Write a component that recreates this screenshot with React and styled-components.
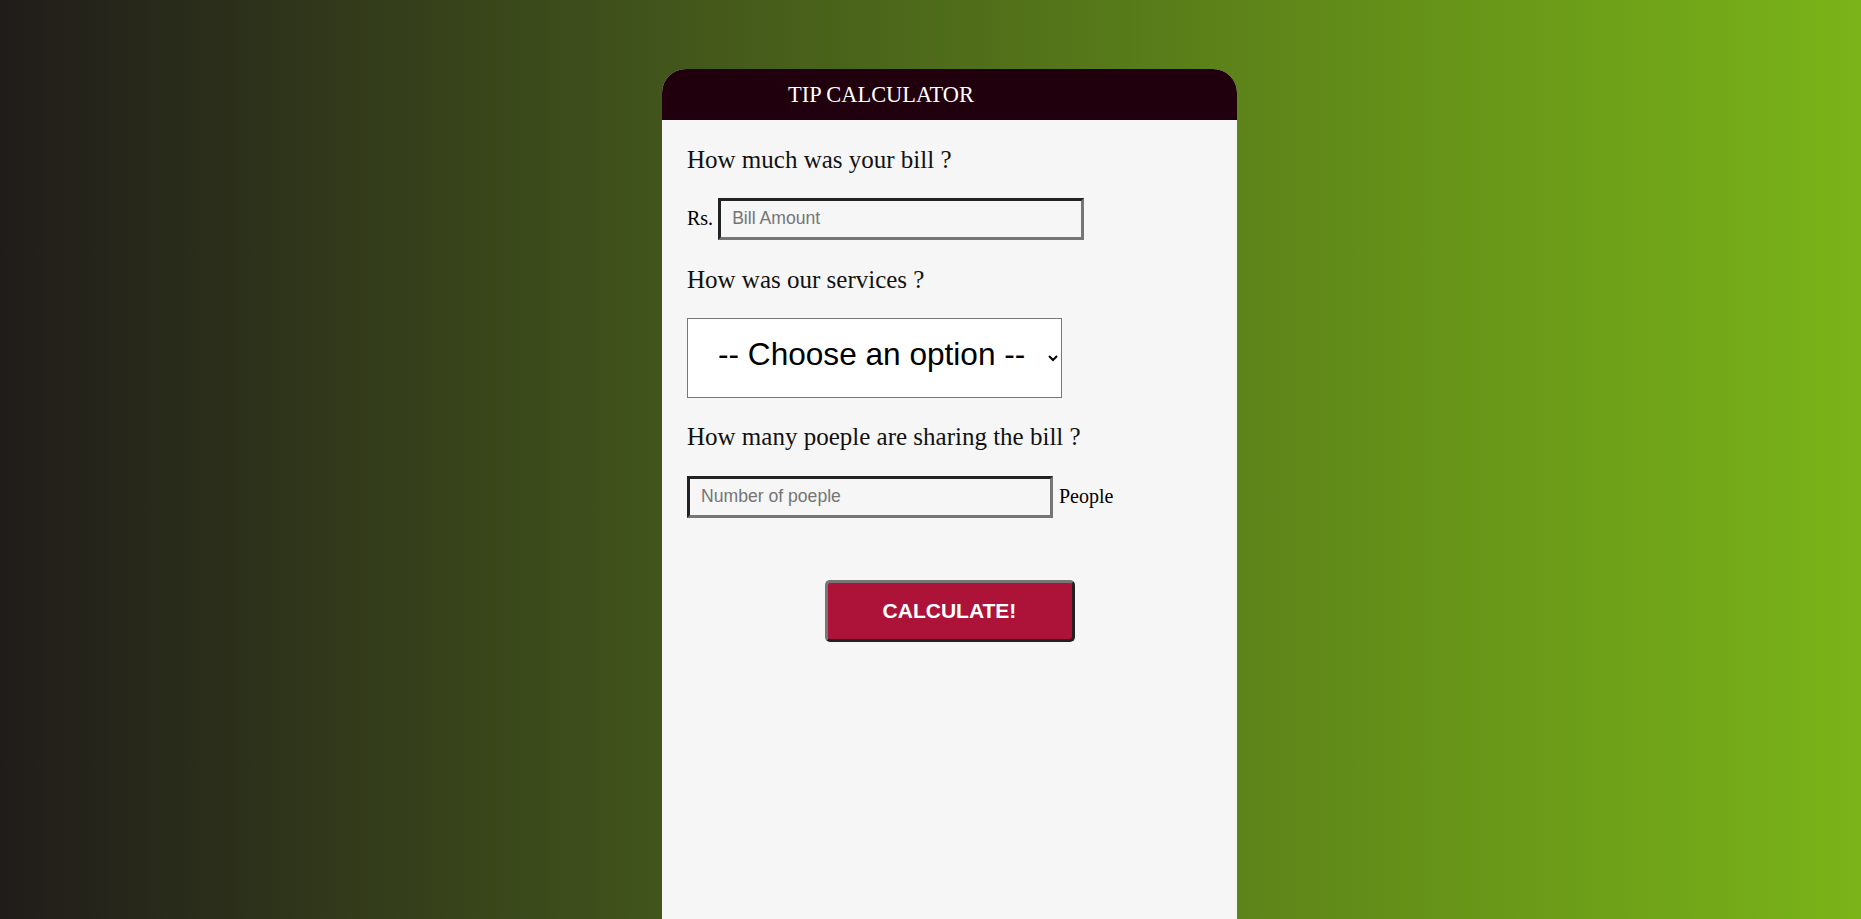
import React from "react";
import styled, { createGlobalStyle } from "styled-components";

const Global = createGlobalStyle`
  html, body { margin: 0; padding: 0; }
  body {
    min-height: 100vh;
    background: linear-gradient(to right, #201c1a 0%, #41541b 35%, #5d8419 67%, #7ab418 100%);
    font-family: "Liberation Serif", "Times New Roman", serif;
    overflow: hidden;
  }
`;

const Page = styled.div`
  display: flex;
  padding-top: 69px;
  padding-left: 662px;
  height: 100vh;
  box-sizing: border-box;
`;

const Card = styled.div`
  width: 575px;
  min-height: 900px;
  background: #f6f6f6;
  border-radius: 24px 24px 0 0;
  overflow: hidden;
  display: flex;
  flex-direction: column;
`;

const Header = styled.div`
  height: 51px;
  background: #21000d;
  display: flex;
  align-items: center;
  padding-left: 126px;
  color: #ffffff;
  font-size: 22.4px;
  font-family: "Liberation Serif", "Times New Roman", serif;
`;

const Body = styled.div`
  display: flex;
  flex-direction: column;
  padding: 25px 25px;
`;

const Question = styled.p`
  margin: 0;
  font-size: 25px;
  line-height: 29px;
  color: #111;
  margin-bottom: ${(p) => p.$after || 24}px;
`;

const Row = styled.div`
  display: flex;
  align-items: center;
  gap: ${(p) => p.$gap || 6}px;
  margin-bottom: ${(p) => p.$after || 25}px;
`;

const Label = styled.span`
  font-size: 20px;
  color: #000;
  padding-bottom: 2px;
`;

const TextInput = styled.input`
  width: 366px;
  height: 42px;
  box-sizing: border-box;
  background: transparent;
  border-style: solid;
  border-width: 3px;
  border-color: #222 #767676 #767676 #222;
  padding: 0 11px 2px;
  font-family: "Liberation Sans", Arial, sans-serif;
  font-size: 17.6px;
  color: #000;
  outline: none;
  &::placeholder { color: #757575; }
`;

const Select = styled.select`
  width: 375px;
  height: 80px;
  box-sizing: border-box;
  background: #fff;
  border: 1px solid #767676;
  border-radius: 0;
  padding: 0 6px 8px 26px;
  font-family: "Liberation Sans", Arial, sans-serif;
  font-size: 31.6px;
  color: #000;
  margin-bottom: 24px;
  align-self: flex-start;
`;

const ButtonWrap = styled.div`
  display: flex;
  justify-content: center;
  margin-top: 37px;
`;

const Button = styled.button`
  width: 250px;
  height: 62px;
  box-sizing: border-box;
  background: #ad1338;
  color: #fff;
  border-style: solid;
  border-width: 3px;
  border-color: #767676 #222 #222 #767676;
  border-radius: 5px;
  font-family: "Liberation Sans", Arial, sans-serif;
  font-weight: bold;
  font-size: 21px;
  cursor: pointer;
`;

export default function App() {
  return (
    <>
      <Global />
      <Page>
        <Card>
          <Header>TIP CALCULATOR</Header>
          <Body>
            <Question>How much was your bill ?</Question>
            <Row $gap={5}>
              <Label>Rs.</Label>
              <TextInput placeholder="Bill Amount" />
            </Row>
            <Question>How was our services ?</Question>
            <Select defaultValue="">
              <option value="" disabled>-- Choose an option --</option>
              <option value="0.3">30% - Outstanding</option>
              <option value="0.2">20% - Good</option>
              <option value="0.15">15% - It was OK</option>
              <option value="0.1">10% - Bad</option>
              <option value="0.05">5% - Terrible</option>
            </Select>
            <Question $after={25}>How many poeple are sharing the bill ?</Question>
            <Row $after={0}>
              <TextInput placeholder="Number of poeple" />
              <Label>People</Label>
            </Row>
            <ButtonWrap>
              <Button>CALCULATE!</Button>
            </ButtonWrap>
          </Body>
        </Card>
      </Page>
    </>
  );
}
